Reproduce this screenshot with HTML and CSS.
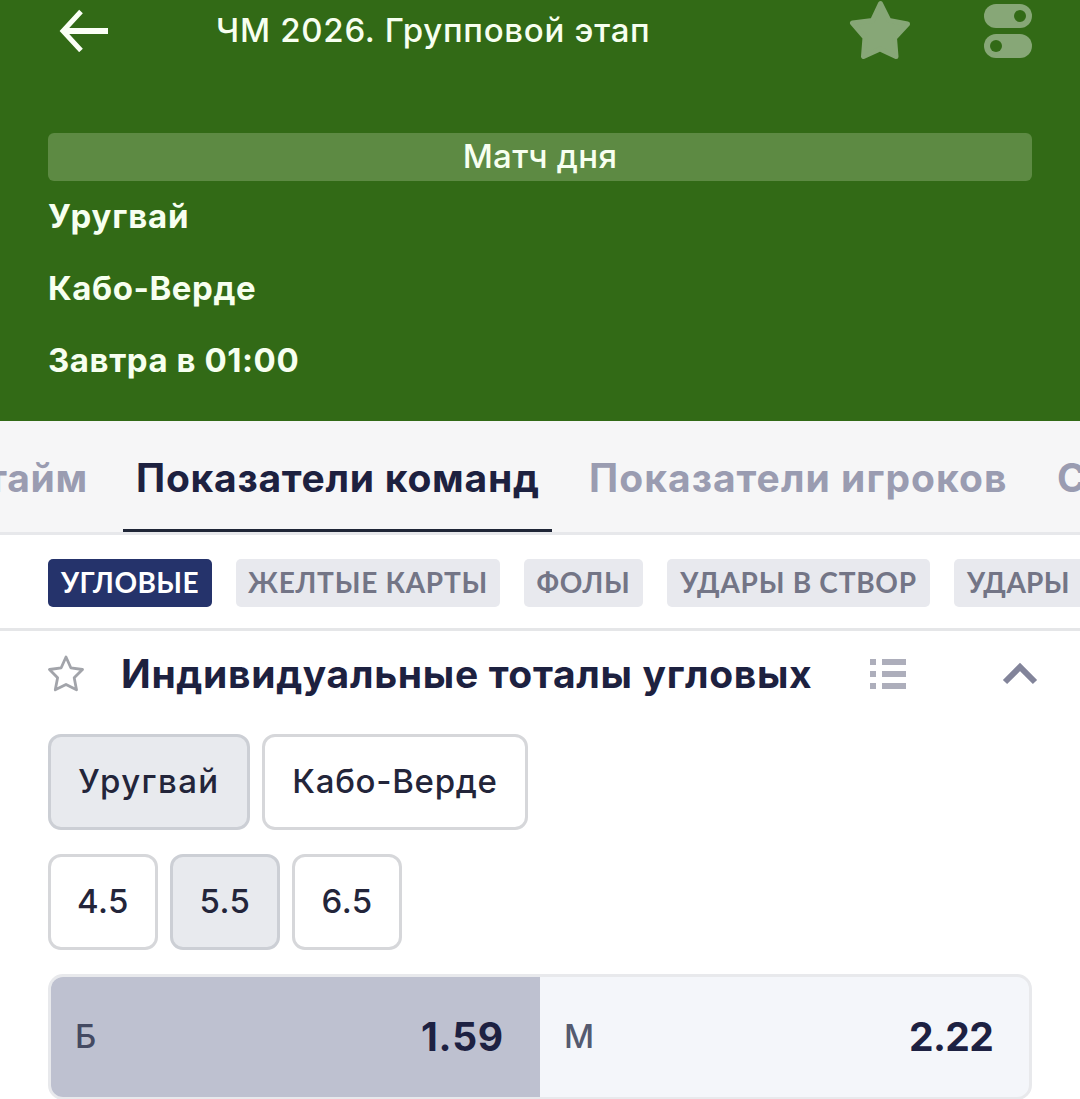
FILE: index.html
```
<!DOCTYPE html>
<html lang="ru">
<head>
  <meta charset="UTF-8" />
  <meta name="viewport" content="width=device-width, initial-scale=1.0" />
  <title>Уругвай - Кабо-Верде</title>
  <link rel="stylesheet" href="styles.css">
</head>
<body>
<header class="match-header">
  <div class="top-bar">
    <svg class="back" width="50" height="44" viewBox="0 0 50 44" fill="none" stroke="#fbfff6" stroke-width="5">
      <path d="M22 3.5 L4 23 L22 42.5" />
      <path d="M4 23 H49" stroke-width="6" />
    </svg>
    <h1 class="league">ЧМ 2026. Групповой этап</h1>
    <svg class="fav" width="62" height="60" viewBox="0 0 62 60" fill="#87a777" stroke="#87a777" stroke-width="5" stroke-linejoin="round">
      <path d="M31.5 3.500 L40 20.5 L58.500 24 L45.500 38 L47 56.500 L31 49 L14.500 56.500 L16 37.500 L3.500 23 L23.500 20.500 Z" />
    </svg>
    <svg class="switches" width="48" height="54" viewBox="0 0 48 54">
      <rect width="48" height="24" rx="12" fill="#87a777" />
      <circle cx="36" cy="12" r="6" fill="#326a16" />
      <rect y="30" width="48" height="24" rx="12" fill="#87a777" />
      <circle cx="12" cy="42" r="6" fill="#326a16" />
    </svg>
  </div>
  <div class="banner">Матч дня</div>
  <div class="match-info">
    <p class="team-first">Уругвай</p>
    <p>Кабо-Верде</p>
    <p>Завтра в 01:00</p>
  </div>
</header>

<nav class="tabs">
  <a class="tab tab-prev">тайм</a>
  <a class="tab active">Показатели команд</a>
  <a class="tab tab-players">Показатели игроков</a>
  <a class="tab">С</a>
</nav>

<div class="chips">
  <span class="chip active">УГЛОВЫЕ</span>
  <span class="chip">ЖЕЛТЫЕ КАРТЫ</span>
  <span class="chip">ФОЛЫ</span>
  <span class="chip">УДАРЫ В СТВОР</span>
  <span class="chip chip-last">УДАРЫ</span>
</div>

<main class="market">
  <div class="market-head">
    <svg width="36" height="37" viewBox="0 0 36 37" fill="none" stroke="#a2a4aa" stroke-width="2.8" stroke-linejoin="round">
      <path d="M18 2 L22.800 12.800 L34.500 14.500 L26.200 22.800 L28.500 34.800 L18 29.500 L7.300 34.800 L9.600 22.800 L1.500 14.500 L13.200 12.800 Z" />
    </svg>
    <h2>Индивидуальные тоталы угловых</h2>
    <svg width="36" height="30" viewBox="0 0 36 30" fill="#adaebb">
      <path d="M0 0h6v6H0zM12 0h24v6H12zM0 12h6v6H0zM12 12h24v6H12zM0 24h6v6H0zM12 24h24v6H12z" />
    </svg>
    <svg class="chevron" width="36" height="24" viewBox="0 0 36 24" fill="none" stroke="#82849a" stroke-width="6">
      <path d="M3 20 L18 5 L33 20" />
    </svg>
  </div>

  <div class="options teams">
    <button class="selected opt-uru">Уругвай</button>
    <button>Кабо-Верде</button>
  </div>
  <div class="options totals">
    <button>4.5</button>
    <button class="selected">5.5</button>
    <button>6.5</button>
  </div>

  <div class="odds">
    <div class="odd picked"><span>Б</span><b>1.59</b></div>
    <div class="odd"><span>М</span><b class="under">2.22</b></div>
  </div>
</main>
</body>
</html>
```
FILE: styles.css
```
* {
  margin: 0;
  padding: 0;
  box-sizing: border-box;
}
body {
  height: 1099px;
  overflow: hidden;
  background: #fff;
  color: #1d2140;
  font-family: 'Inter', sans-serif;
}
svg {
  display: block;
  flex: none;
}

/* header */
.match-header {
  height: 421px;
  padding: 0 48px;
  background: #326a16;
  color: #f7fff0;
}
.top-bar {
  display: flex;
  height: 133px;
  padding-left: 11px;
}
.back {
  margin-top: 8px;
}
.league {
  flex: 1;
  padding-left: 107px;
  font-size: 33px;
  font-weight: 500;
  line-height: 60px;
  letter-spacing: 0.72px;
  white-space: nowrap;
}
.fav {
  margin-right: 73px;
}
.switches {
  margin-top: 4px;
}
.banner {
  height: 48px;
  border-radius: 6px;
  background: #5d8a43;
  font-size: 33px;
  font-weight: 500;
  line-height: 47px;
  letter-spacing: 0.3px;
  text-align: center;
}
.match-info p {
  height: 72px;
  font-size: 33px;
  font-weight: 700;
  line-height: 70px;
  letter-spacing: 0.55px;
}
.match-info .team-first {
  letter-spacing: 0.83px;
}

/* tabs */
.tabs {
  display: flex;
  gap: 24px;
  height: 114px;
  border-bottom: 3px solid #e7e8eb;
  background: #f6f6f7;
  overflow: hidden;
}
.tab {
  flex: none;
  padding: 0 11px 0 13px;
  border-bottom: 3px solid transparent;
  color: #9a9cb1;
  font-size: 39px;
  font-weight: 700;
  line-height: 113px;
  letter-spacing: 0.75px;
  white-space: nowrap;
}
.tab.active {
  width: 429px;
  border-color: #1f2637;
  color: #1d2140;
}
.tab-prev {
  display: flex;
  justify-content: flex-end;
  width: 99px;
}
.tab-players {
  width: 444px;
  letter-spacing: 1.05px;
}

/* filter chips */
.chips {
  display: grid;
  grid-template-columns: 164px 264px 119px 263px 150px;
  gap: 24px;
  height: 96px;
  padding: 24px 0 0 48px;
  border-bottom: 3px solid #e5e6e8;
  overflow: hidden;
}
.chip {
  height: 48px;
  border-radius: 5px;
  background: #e8e9ee;
  color: #737586;
  font-family: 'Lato', sans-serif;
  font-size: 28px;
  font-weight: 700;
  line-height: 46px;
  letter-spacing: 0.74px;
  text-align: center;
  white-space: nowrap;
}
.chip.active {
  background: #25336b;
  color: #fff;
  letter-spacing: 0.45px;
}
.chip-last {
  padding-left: 13px;
  letter-spacing: 0.3px;
  text-align: left;
}

/* market */
.market {
  padding: 0 48px;
}
.market-head {
  display: flex;
  align-items: center;
  height: 85px;
  margin-right: -6px;
}
.market-head h2 {
  width: 786px;
  padding-left: 37px;
  font-size: 39px;
  font-weight: 700;
  letter-spacing: 0.67px;
  white-space: nowrap;
}
.chevron {
  margin-left: auto;
}
.options {
  display: flex;
  gap: 12px;
  margin-bottom: 24px;
}
.teams {
  margin-top: 18px;
}
.options button {
  width: 110px;
  height: 96px;
  padding-bottom: 2px;
  border: 3px solid #d6d7da;
  border-radius: 13px;
  background: #fff;
  color: #23253a;
  font-family: inherit;
  font-size: 33px;
  font-weight: 500;
  letter-spacing: 0.42px;
}
.options .selected {
  border-color: #cccfd5;
  background: #e8eaee;
}
.teams button {
  width: 266px;
  letter-spacing: 0.7px;
}
.teams .opt-uru {
  width: 202px;
  letter-spacing: 1.43px;
}
.odds {
  display: flex;
  height: 126px;
  border: 3px solid #e8e9ec;
  border-radius: 15px;
  background: #f4f6fa;
  overflow: hidden;
}
.odd {
  flex: 1;
  display: flex;
  justify-content: space-between;
  padding: 0 36px 0 24px;
  color: #555b70;
  font-size: 33px;
  font-weight: 500;
  line-height: 119px;
}
.odd.picked {
  background: #bec1d0;
  color: #444a62;
}
.odd b {
  color: #1d2142;
  font-size: 39px;
  font-weight: 700;
  letter-spacing: 0.8px;
}
.odd .under {
  letter-spacing: -0.7px;
}
```
